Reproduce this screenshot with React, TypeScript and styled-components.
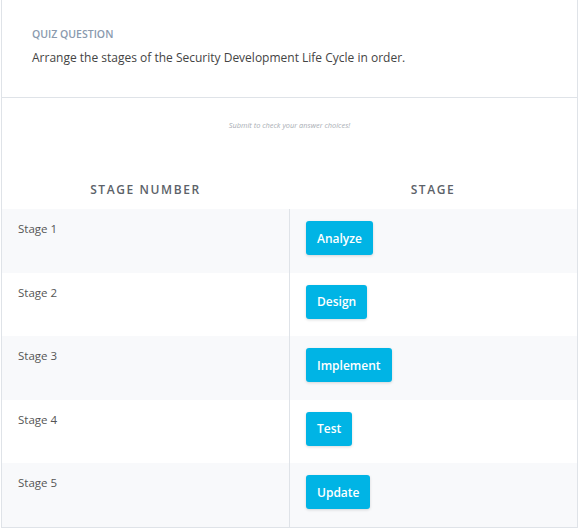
import React from "react";
import styled, { createGlobalStyle } from "styled-components";

const Global = createGlobalStyle`
  body {
    margin: 0;
    background: #fff;
    font-family: "Open Sans", "Noto Sans", sans-serif;
  }
`;

const Card = styled.div`
  width: 577px;
  margin-left: 1px;
  border: 1px solid #dfe3e8;
  border-top: none;
  box-sizing: border-box;
  background: #fff;
`;

const Header = styled.div`
  padding: 27px 30px 30px;
  border-bottom: 1px solid #dfe3e8;
`;

const Label = styled.div`
  font-size: 10.5px;
  color: #8a9aae;
  font-weight: 600;
  line-height: 14px;
  margin-bottom: 8px;
`;

const Question = styled.div`
  font-size: 12px;
  color: #444;
  line-height: 18px;
`;

const Hint = styled.div`
  text-align: center;
  font-size: 7.4px;
  font-style: italic;
  color: #a9aeb4;
  padding-top: 22px;
  height: 47px;
`;

const Table = styled.div`
  display: grid;
  grid-template-columns: 287px 1fr;
`;

const HeadCell = styled.div`
  text-align: center;
  font-size: 12px;
  font-weight: 600;
  letter-spacing: 1.6px;
  color: #5c6269;
  padding: 14px 0 4px;
  height: 24px;
  box-sizing: content-box;
`;

const Cell = styled.div<{ $shade: boolean; $right?: boolean }>`
  background: ${(p) => (p.$shade ? "#f8f9fb" : "#fff")};
  height: 63.6px;
  box-sizing: border-box;
  border-left: ${(p) => (p.$right ? "1px solid #dfe3e8" : "none")};
  padding: 12px 16px;
  font-size: 11.5px;
  color: #555;
`;

const Chip = styled.div`
  display: inline-flex;
  align-items: center;
  height: 34px;
  padding: 0 11px;
  background: #00b4e5;
  color: #fff;
  font-size: 12px;
  font-weight: 600;
  border-radius: 3px;
  box-shadow: 0 1px 3px rgba(0, 0, 0, 0.15);
`;

const stages = ["Analyze", "Design", "Implement", "Test", "Update"];

const App: React.FC = () => {
  return (
    <>
      <Global />
      <Card>
        <Header>
          <Label>QUIZ QUESTION</Label>
          <Question>
            Arrange the stages of the Security Development Life Cycle in order.
          </Question>
        </Header>
        <Hint>Submit to check your answer choices!</Hint>
        <Table>
          <HeadCell>STAGE NUMBER</HeadCell>
          <HeadCell>STAGE</HeadCell>
          {stages.map((s, i) => (
            <React.Fragment key={s}>
              <Cell $shade={i % 2 === 0}>Stage {i + 1}</Cell>
              <Cell $shade={i % 2 === 0} $right>
                <Chip>{s}</Chip>
              </Cell>
            </React.Fragment>
          ))}
        </Table>
      </Card>
    </>
  );
};

export default App;
